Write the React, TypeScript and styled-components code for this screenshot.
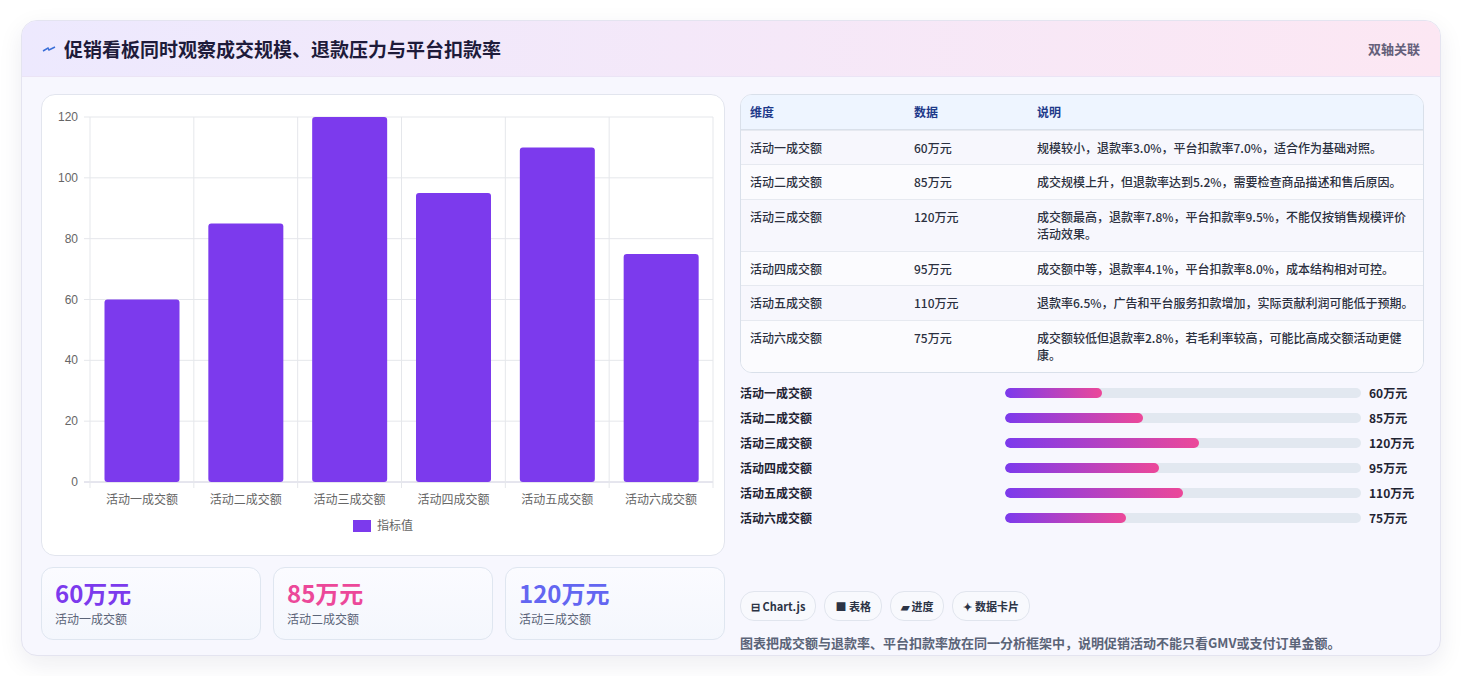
import React from "react";
import styled, { createGlobalStyle } from "styled-components";

const Global = createGlobalStyle`
  body { margin: 0; background: #fff; font-family: "Noto Sans CJK SC", "Noto Sans", sans-serif; }
`;

const Page = styled.div`
  padding: 20px 21px;
`;

const Card = styled.div`
  border: 1px solid #e4e4f0;
  border-radius: 16px;
  background: #f7f7fe;
  box-shadow: 0 8px 24px rgba(30, 27, 75, 0.08);
  overflow: hidden;
  height: 636px;
  box-sizing: border-box;
`;

const Header = styled.div`
  height: 55px;
  display: flex;
  align-items: center;
  justify-content: space-between;
  padding: 0 20px;
  background: linear-gradient(90deg, #ede9fe, #fce7f3);
  border-bottom: 1px solid #ebe4f5;
`;

const Title = styled.h1`
  margin: 0;
  font-size: 19px;
  font-weight: 700;
  color: #1e1b3a;
  display: flex;
  align-items: center;
  gap: 8px;
`;

const HeaderTag = styled.span`
  font-size: 13px;
  color: #64607a;
  font-weight: 600;
`;

const Body = styled.div`
  display: grid;
  grid-template-columns: 684px 684px;
  gap: 15px;
  padding: 17px 19px;
`;

const Col = styled.div`
  display: flex;
  flex-direction: column;
`;

const ChartPanel = styled.div`
  background: #fff;
  border: 1px solid #e2e5ee;
  border-radius: 14px;
  height: 462px;
  box-sizing: border-box;
  position: relative;
`;

const Stats = styled.div`
  display: grid;
  grid-template-columns: repeat(3, 1fr);
  gap: 12px;
  margin-top: 11px;
`;

const Stat = styled.div`
  border: 1px solid #dfe6f0;
  border-radius: 12px;
  background: linear-gradient(180deg, #fbfbff, #f4f7fd);
  height: 73px;
  box-sizing: border-box;
  padding: 10px 13px;
`;

const StatValue = styled.div<{ $c: string }>`
  font-size: 24px;
  font-weight: 700;
  color: ${(p) => p.$c};
  line-height: 30px;
`;

const StatLabel = styled.div`
  font-size: 12px;
  color: #5b6478;
  margin-top: 2px;
`;

const Table = styled.div`
  border: 1px solid #d9e0ea;
  border-radius: 12px;
  overflow: hidden;
  background: #fbfbfe;
`;

const Row = styled.div<{ $head?: boolean; $alt?: boolean }>`
  display: grid;
  grid-template-columns: 164px 123px 1fr;
  padding: 8px 9px;
  font-size: 12px;
  line-height: 17.5px;
  color: ${(p) => (p.$head ? "#1e3a8a" : "#2b3040")};
  font-weight: ${(p) => (p.$head ? 600 : 500)};
  background: ${(p) => (p.$head ? "#eef5ff" : p.$alt ? "#f7f7fd" : "#fbfbfe")};
  border-top: ${(p) => (p.$head ? "none" : "1px solid #e6e9f0")};
  ${(p) => p.$head && "border-bottom: 1px solid #d9e0ea;"}
`;

const Bars = styled.div`
  margin-top: 11px;
  display: flex;
  flex-direction: column;
  gap: 7px;
`;

const BarRow = styled.div`
  display: grid;
  grid-template-columns: 257px 356px 1fr;
  column-gap: 8px;
  align-items: center;
  height: 18px;
  font-size: 12px;
  font-weight: 600;
  color: #1f2433;
`;

const Track = styled.div`
  height: 10px;
  border-radius: 5px;
  background: #e2e8f0;
  overflow: hidden;
`;

const Fill = styled.div`
  height: 100%;
  border-radius: 5px;
  background: linear-gradient(90deg, #7c3aed, #ec4899);
`;

const Chips = styled.div`
  display: flex;
  gap: 8px;
  margin-top: 64px;
`;

const Chip = styled.span`
  font-size: 11px;
  font-weight: 700;
  color: #2b3345;
  border: 1px solid #e1e5ee;
  background: #f8f9fd;
  border-radius: 14px;
  padding: 0 10px;
  height: 28px;
  line-height: 28px;
`;

const Foot = styled.p`
  margin: 12px 0 0;
  font-size: 13px;
  font-weight: 600;
  color: #5b6478;
`;

const rows = [
  ["活动一成交额", "60万元", "规模较小，退款率3.0%，平台扣款率7.0%，适合作为基础对照。"],
  ["活动二成交额", "85万元", "成交规模上升，但退款率达到5.2%，需要检查商品描述和售后原因。"],
  ["活动三成交额", "120万元", "成交额最高，退款率7.8%，平台扣款率9.5%，不能仅按销售规模评价活动效果。"],
  ["活动四成交额", "95万元", "成交额中等，退款率4.1%，平台扣款率8.0%，成本结构相对可控。"],
  ["活动五成交额", "110万元", "退款率6.5%，广告和平台服务扣款增加，实际贡献利润可能低于预期。"],
  ["活动六成交额", "75万元", "成交额较低但退款率2.8%，若毛利率较高，可能比高成交额活动更健康。"],
];
const vals = [60, 85, 120, 95, 110, 75];

const Chart = () => {
  const x0 = 48, x1 = 671, y0 = 22, y1 = 387;
  const cw = (x1 - x0) / 6;
  const sy = (v: number) => y1 - (v / 120) * (y1 - y0);
  return (
    <svg width="682" height="460" style={{ display: "block" }}>
      {[0, 20, 40, 60, 80, 100, 120].map((t) => (
        <g key={t}>
          <line x1={x0 - 6} x2={x1} y1={sy(t)} y2={sy(t)} stroke={t === 0 ? "#ccd" : "#e5e7eb"} />
          <text x={x0 - 12} y={sy(t) + 4} textAnchor="end" fontSize="12" fill="#666" fontFamily="Liberation Sans">{t}</text>
        </g>
      ))}
      {Array.from({ length: 7 }).map((_, i) => (
        <line key={i} x1={x0 + i * cw} x2={x0 + i * cw} y1={y0} y2={y1 + 6} stroke="#e5e7eb" />
      ))}
      {vals.map((v, i) => (
        <g key={i}>
          <rect x={x0 + i * cw + 14.5} y={sy(v)} width={75} height={y1 - sy(v)} rx="3" fill="#7c3aed" />
          <text x={x0 + i * cw + cw / 2} y={409} textAnchor="middle" fontSize="12" fill="#666">{rows[i][0]}</text>
        </g>
      ))}
      <rect x="311" y="425" width="18" height="12" fill="#7c3aed" />
      <text x="335" y="435" fontSize="12" fill="#666">指标值</text>
    </svg>
  );
};

export default function App() {
  return (
    <Page>
      <Global />
      <Card>
        <Header>
          <Title>
            <svg width="14" height="10" viewBox="0 0 14 10"><path d="M1 7 L6 4 L7 6 L13 3" stroke="#3b6fd8" strokeWidth="1.5" fill="none" /></svg>
            促销看板同时观察成交规模、退款压力与平台扣款率
          </Title>
          <HeaderTag>双轴关联</HeaderTag>
        </Header>
        <Body>
          <Col>
            <ChartPanel><Chart /></ChartPanel>
            <Stats>
              <Stat><StatValue $c="#7c3aed">60万元</StatValue><StatLabel>活动一成交额</StatLabel></Stat>
              <Stat><StatValue $c="#ec4899">85万元</StatValue><StatLabel>活动二成交额</StatLabel></Stat>
              <Stat><StatValue $c="#6366f1">120万元</StatValue><StatLabel>活动三成交额</StatLabel></Stat>
            </Stats>
          </Col>
          <Col>
            <Table>
              <Row $head><span>维度</span><span>数据</span><span>说明</span></Row>
              {rows.map((r, i) => (
                <Row key={i} $alt={i % 2 === 0}><span>{r[0]}</span><span>{r[1]}</span><span>{r[2]}</span></Row>
              ))}
            </Table>
            <Bars>
              {rows.map((r, i) => (
                <BarRow key={i}>
                  <span>{r[0]}</span>
                  <Track><Fill style={{ width: `${(vals[i] / 220) * 100}%` }} /></Track>
                  <span>{r[1]}</span>
                </BarRow>
              ))}
            </Bars>
            <Chips>
              <Chip>⊟ Chart.js</Chip>
              <Chip>■ 表格</Chip>
              <Chip>▰ 进度</Chip>
              <Chip>✦ 数据卡片</Chip>
            </Chips>
            <Foot>图表把成交额与退款率、平台扣款率放在同一分析框架中，说明促销活动不能只看GMV或支付订单金额。</Foot>
          </Col>
        </Body>
      </Card>
    </Page>
  );
}
